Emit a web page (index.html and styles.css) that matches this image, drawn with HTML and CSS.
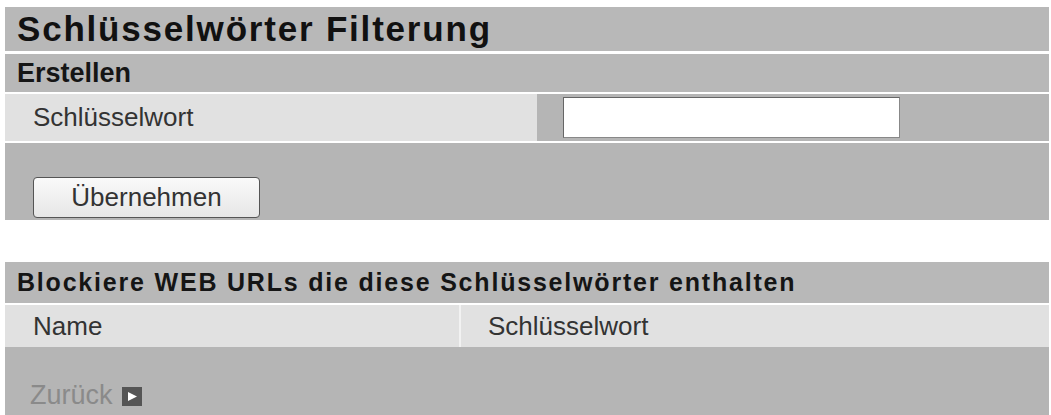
FILE: index.html
```html
<!DOCTYPE html>
<html lang="de">
<head>
<meta charset="utf-8">
<title>Schlüsselwörter Filterung</title>
<link rel="stylesheet" href="styles.css">
</head>
<body>
<div class="page">
  <div class="title">Schlüsselwörter Filterung</div>
  <div class="subbar">Erstellen</div>
  <div class="form-row">
    <div class="label-cell">Schlüsselwort</div>
    <div class="input-cell"><input class="text-input" type="text"></div>
  </div>
  <div class="actions">
    <button class="btn" type="button">Übernehmen</button>
  </div>
  <div class="subbar list-title">Blockiere WEB URLs die diese Schlüsselwörter enthalten</div>
  <div class="list-head">
    <div class="head-cell">Name</div>
    <div class="head-cell head-second">Schlüsselwort</div>
  </div>
  <div class="footer">
    <span class="back">Zurück</span>
    <span class="back-icon"><svg width="20" height="19" viewBox="0 0 20 19"><rect width="20" height="19" fill="#555"/><path d="M6 5 L15 9.5 L6 14 Z" fill="#fff"/></svg></span>
  </div>
</div>
</body>
</html>
```
FILE: styles.css
```css
html, body {
  margin: 0;
  padding: 0;
  background: #ffffff;
}

.page {
  margin: 7px 2px 0 5px;
  font-family: "Liberation Sans", Arial, sans-serif;
  color: #333;
}

.title {
  height: 44px;
  background: #b8b8b8;
  display: flex;
  align-items: center;
  padding-left: 12px;
  font-size: 35px;
  font-weight: bold;
  letter-spacing: 1.8px;
  color: #111;
}

.subbar {
  margin-top: 3px;
  height: 38px;
  background: #b8b8b8;
  display: flex;
  align-items: center;
  padding-left: 12px;
  font-size: 27px;
  font-weight: bold;
  color: #151515;
}

.form-row {
  margin-top: 2px;
  height: 47px;
  display: grid;
  grid-template-columns: 532px 1fr;
}

.label-cell {
  background: #e1e1e1;
  display: flex;
  align-items: center;
  padding-left: 28px;
  font-size: 26px;
  color: #333;
}

.input-cell {
  background: #b5b5b5;
  display: flex;
  align-items: center;
  padding-left: 26px;
}

.text-input {
  width: 337px;
  height: 41px;
  box-sizing: border-box;
  border: 1px solid #666;
  border-right-color: #888;
  border-bottom-color: #888;
  background: #fff;
  margin: 0;
  padding: 0;
}

.actions {
  margin-top: 2px;
  height: 77px;
  box-sizing: border-box;
  background: #b5b5b5;
  padding: 34px 0 0 28px;
}

.btn {
  width: 227px;
  height: 41px;
  margin: 0;
  padding: 0;
  border: 1px solid #555;
  border-radius: 4px;
  background: linear-gradient(#fafafa, #e6e6e6);
  font-family: "Liberation Sans", Arial, sans-serif;
  font-size: 26px;
  color: #333;
}

.list-title {
  margin-top: 42px;
  height: 41px;
  font-size: 25px;
  letter-spacing: 1.8px;
}

.list-head {
  margin-top: 2px;
  height: 42px;
  display: grid;
  grid-template-columns: 454px 1fr;
  background: #e1e1e1;
}

.head-cell {
  display: flex;
  align-items: center;
  padding-left: 28px;
  font-size: 26px;
  color: #333;
}

.head-second {
  border-left: 2px solid #f2f2f2;
  padding-left: 27px;
}

.footer {
  height: 68px;
  box-sizing: border-box;
  background: #b5b5b5;
  padding: 33px 0 0 25px;
  display: flex;
  align-items: flex-start;
}

.back {
  font-size: 27px;
  color: #8a8a8a;
  line-height: 31px;
}

.back-icon {
  display: inline-flex;
  margin-left: 9px;
  margin-top: 7px;
}
```
